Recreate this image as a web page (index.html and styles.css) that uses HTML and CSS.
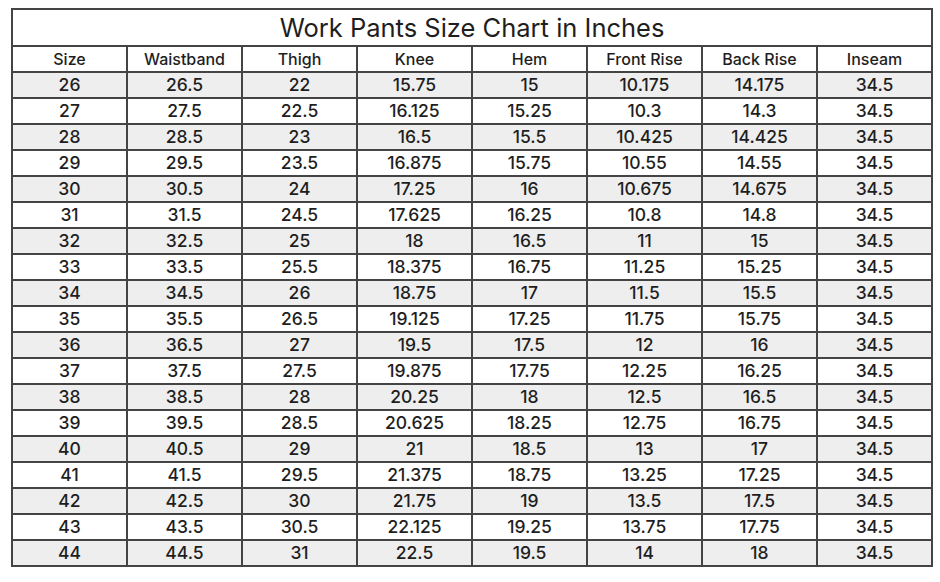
FILE: index.html
```html
<!DOCTYPE html>
<html>
<head>
<meta charset="utf-8">
<link rel="stylesheet" href="styles.css">
</head>
<body>
<table class="chart">
<colgroup>
<col class="c"><col class="c"><col class="c"><col class="c"><col class="c"><col class="c"><col class="c"><col class="c">
</colgroup>
<thead>
<tr class="title-row"><th colspan="8" class="title">Work Pants Size Chart in Inches</th></tr>
<tr class="head-row"><th>Size</th><th>Waistband</th><th>Thigh</th><th>Knee</th><th>Hem</th><th>Front Rise</th><th>Back Rise</th><th>Inseam</th></tr>
</thead>
<tbody>
<tr><td>26</td><td>26.5</td><td>22</td><td>15.75</td><td>15</td><td>10.175</td><td>14.175</td><td>34.5</td></tr>
<tr><td>27</td><td>27.5</td><td>22.5</td><td>16.125</td><td>15.25</td><td>10.3</td><td>14.3</td><td>34.5</td></tr>
<tr><td>28</td><td>28.5</td><td>23</td><td>16.5</td><td>15.5</td><td>10.425</td><td>14.425</td><td>34.5</td></tr>
<tr><td>29</td><td>29.5</td><td>23.5</td><td>16.875</td><td>15.75</td><td>10.55</td><td>14.55</td><td>34.5</td></tr>
<tr><td>30</td><td>30.5</td><td>24</td><td>17.25</td><td>16</td><td>10.675</td><td>14.675</td><td>34.5</td></tr>
<tr><td>31</td><td>31.5</td><td>24.5</td><td>17.625</td><td>16.25</td><td>10.8</td><td>14.8</td><td>34.5</td></tr>
<tr><td>32</td><td>32.5</td><td>25</td><td>18</td><td>16.5</td><td>11</td><td>15</td><td>34.5</td></tr>
<tr><td>33</td><td>33.5</td><td>25.5</td><td>18.375</td><td>16.75</td><td>11.25</td><td>15.25</td><td>34.5</td></tr>
<tr><td>34</td><td>34.5</td><td>26</td><td>18.75</td><td>17</td><td>11.5</td><td>15.5</td><td>34.5</td></tr>
<tr><td>35</td><td>35.5</td><td>26.5</td><td>19.125</td><td>17.25</td><td>11.75</td><td>15.75</td><td>34.5</td></tr>
<tr><td>36</td><td>36.5</td><td>27</td><td>19.5</td><td>17.5</td><td>12</td><td>16</td><td>34.5</td></tr>
<tr><td>37</td><td>37.5</td><td>27.5</td><td>19.875</td><td>17.75</td><td>12.25</td><td>16.25</td><td>34.5</td></tr>
<tr><td>38</td><td>38.5</td><td>28</td><td>20.25</td><td>18</td><td>12.5</td><td>16.5</td><td>34.5</td></tr>
<tr><td>39</td><td>39.5</td><td>28.5</td><td>20.625</td><td>18.25</td><td>12.75</td><td>16.75</td><td>34.5</td></tr>
<tr><td>40</td><td>40.5</td><td>29</td><td>21</td><td>18.5</td><td>13</td><td>17</td><td>34.5</td></tr>
<tr><td>41</td><td>41.5</td><td>29.5</td><td>21.375</td><td>18.75</td><td>13.25</td><td>17.25</td><td>34.5</td></tr>
<tr><td>42</td><td>42.5</td><td>30</td><td>21.75</td><td>19</td><td>13.5</td><td>17.5</td><td>34.5</td></tr>
<tr><td>43</td><td>43.5</td><td>30.5</td><td>22.125</td><td>19.25</td><td>13.75</td><td>17.75</td><td>34.5</td></tr>
<tr><td>44</td><td>44.5</td><td>31</td><td>22.5</td><td>19.5</td><td>14</td><td>18</td><td>34.5</td></tr>
</tbody>
</table>
</body>
</html>
```
FILE: styles.css
```css
html, body {
  margin: 0;
  padding: 0;
  background: #ffffff;
}
body {
  padding: 8px 0 0 11px;
  font-family: "Inter", "Noto Sans", sans-serif;
  color: #1e1e1e;
}
.chart {
  border-collapse: collapse;
  table-layout: fixed;
  width: 920px;
}
.chart .c {
  width: 115px;
}
.chart th,
.chart td {
  border: 2px solid #444444;
  padding: 0;
  text-align: center;
  font-weight: 450;
  line-height: 1;
}
.title-row th {
  height: 35px;
  font-size: 25.5px;
  font-weight: 400;
}
.head-row th {
  height: 24px;
  font-size: 16px;
}
.chart td {
  height: 24px;
  font-size: 17.5px;
}
.chart tbody tr:nth-child(odd) td {
  background: #eeeeee;
}
```
